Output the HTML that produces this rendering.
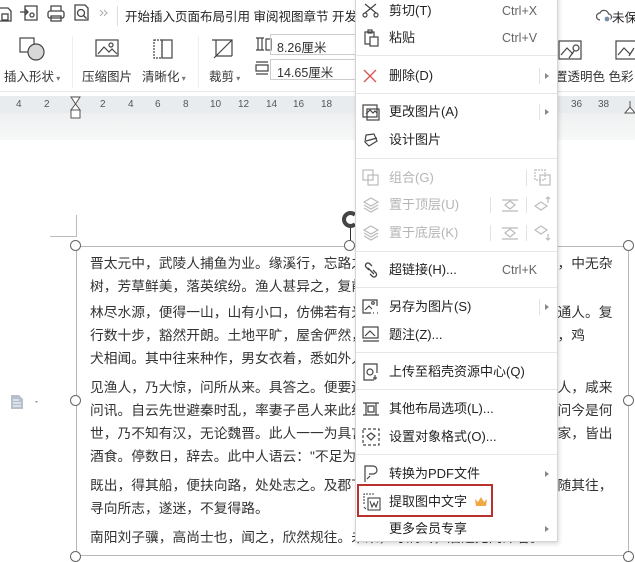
<!DOCTYPE html>
<html><head><meta charset="utf-8"><style>
*{margin:0;padding:0;box-sizing:border-box}
body{width:635px;height:562px;overflow:hidden;background:#fff;position:relative;font-family:"Liberation Sans","Noto Sans CJK SC",sans-serif;color:#333}
.a{position:absolute;white-space:nowrap}
.lbl{font-size:12.5px;color:#333}
.rn{font-size:10px;color:#555;top:99px}
.ln{position:absolute;left:90px;font-size:13.75px;color:#333;white-space:nowrap;line-height:16px}
.h{position:absolute;width:11px;height:11px;border:1px solid #666;border-radius:50%;background:#fff}
.menu{position:absolute;left:355px;top:-4px;width:203px;height:546px;background:#fff;border:1px solid #d5d5d5;box-shadow:1px 2px 4px rgba(0,0,0,.15)}
.mi{position:absolute;left:33px;font-size:13px;color:#222;white-space:nowrap;line-height:16px}
.dis{color:#b5b5b5}
.sc{position:absolute;left:146px;font-size:12.5px;color:#666;line-height:16px}
.sep{position:absolute;left:0;width:201px;height:1px;background:#e6e6e6}
.ar{position:absolute;left:189px;width:0;height:0;border-left:4px solid #888;border-top:3px solid transparent;border-bottom:3px solid transparent}
.vd{position:absolute;width:1px;height:16px;background:#e3e3e3}
.ic{position:absolute;left:6px}
</style></head><body>
<svg class="a" style="left:0;top:0" width="120" height="30" fill="none" stroke="#444" stroke-width="1.3">
<path d="M0 8h8l3 3v10H0"/><rect x="2" y="14" width="6" height="6"/>
<path d="M25 6h12v14H25z"/><path d="M20 12h8M25 9l3 3-3 3"/><circle cx="32" cy="15" r="2"/>
<path d="M51 11V6h10v5"/><rect x="48" y="11" width="16" height="7" rx="2"/><rect x="51" y="16" width="10" height="5"/>
<path d="M75 5h10l3 3v12H75z"/><circle cx="81" cy="13" r="3.5"/><path d="M83.5 15.5l3 3"/>
<path d="M100 10l3 3-3 3M104 10l3 3-3 3" stroke="#aaa" stroke-width="1"/>
</svg>
<div class="a" style="left:117px;top:6px;width:1px;height:20px;background:#ddd"></div>
<div class="a" style="left:125px;top:6px;font-size:12.5px;color:#222">开始插入页面布局引用 审阅视图章节 开发</div>
<svg class="a" style="left:596px;top:8px" width="16" height="14" fill="none" stroke="#555" stroke-width="1.2"><path d="M4 12a3.5 3.5 0 010-7 4.5 4.5 0 018.5 1 3 3 0 010 6"/><circle cx="11" cy="11" r="3" fill="#7a8fa8" stroke="#fff"/></svg>
<div class="a" style="left:612px;top:7px;font-size:12.5px;color:#222">未保</div>
<svg class="a" style="left:0;top:30px" width="360" height="36" fill="none" stroke="#444" stroke-width="1.2">
<rect x="20" y="8" width="14" height="14"/><circle cx="36" cy="22" r="8" fill="#d8d8d8"/>
<rect x="96" y="10" width="22" height="16"/><path d="M98 24l6-7 5 5 3-3 5 5"/><circle cx="111" cy="15" r="2"/>
<rect x="154" y="10" width="8" height="18" stroke-dasharray="2 1"/><rect x="162" y="10" width="10" height="18"/>
<path d="M216 10v16h16M212 10h20v16M214 28l18-18"/>
<path d="M256 8h8M256 20h8M258 8v12M262 8v12M266 9h5v11h-5z"/>
</svg>
<svg class="a" style="left:254px;top:60px" width="16" height="16" fill="none" stroke="#444" stroke-width="1.2"><path d="M2 2h12M2 14h12M2 5h12v6H2z"/></svg>
<div class="a" style="left:270px;top:34px;width:90px;height:21px;border:1px solid #ccc;border-right:none;font-size:12.5px;padding:2px 6px">8.26厘米</div>
<div class="a" style="left:270px;top:59px;width:90px;height:21px;border:1px solid #ccc;border-right:none;font-size:12.5px;padding:2px 6px">14.65厘米</div>
<div class="a lbl" style="left:4px;top:66px">插入形状<span style="font-size:8px;color:#777"> ▾</span></div>
<div class="a lbl" style="left:82px;top:66px">压缩图片</div>
<div class="a lbl" style="left:142px;top:66px">清晰化<span style="font-size:8px;color:#777"> ▾</span></div>
<div class="a lbl" style="left:209px;top:66px">裁剪<span style="font-size:8px;color:#777"> ▾</span></div>
<div class="a" style="left:72px;top:36px;width:1px;height:52px;background:#eee"></div>
<div class="a" style="left:198px;top:36px;width:1px;height:52px;background:#eee"></div>
<svg class="a" style="left:558px;top:40px" width="80" height="22" fill="none" stroke="#444" stroke-width="1.2"><rect x="1" y="1" width="22" height="18"/><path d="M3 15l6-7 6 6"/><circle cx="18" cy="8" r="3"/><path d="M16 11l-5 7"/><rect x="58" y="1" width="22" height="18"/><path d="M60 15l6-7 6 6"/><path d="M76 8l-5 8"/></svg>
<div class="a lbl" style="left:555px;top:66px">置透明色 色彩</div>
<div class="a" style="left:0;top:91px;width:635px;height:1px;background:#e8e8e8"></div>
<div class="a" style="left:0;top:96px;width:635px;height:17px;background:#e9ecef"></div>
<div class="a" style="left:0;top:113px;width:635px;height:27px;background:linear-gradient(#eff0f1,#f7f8f8)"></div>
<div class="a rn" style="left:16px">4</div><div class="a rn" style="left:44px">2</div>
<div class="a rn" style="left:100px">2</div><div class="a rn" style="left:128px">4</div><div class="a rn" style="left:155px">6</div><div class="a rn" style="left:183px">8</div><div class="a rn" style="left:210px">10</div><div class="a rn" style="left:238px">12</div><div class="a rn" style="left:266px">14</div><div class="a rn" style="left:293px">16</div><div class="a rn" style="left:321px">18</div>
<div class="a rn" style="left:571px">36</div><div class="a rn" style="left:598px">38</div>
<svg class="a" style="left:70px;top:96px" width="12" height="24" fill="#fff" stroke="#555"><path d="M1 1h9L5.5 8zM5.5 8L1 14h9zM1 14h9v8H1z"/></svg>
<svg class="a" style="left:624px;top:100px" width="11" height="14" fill="#fff" stroke="#555"><path d="M6 1v6M1 13l5-6 5 6z"/></svg>
<div class="a" style="left:50px;top:236px;width:26px;height:1px;background:#bbb"></div>
<div class="a" style="left:76px;top:215px;width:1px;height:22px;background:#bbb"></div>
<svg class="a" style="left:10px;top:394px" width="30" height="16"><path d="M1 1h8l4 4v10H1z" fill="#b5c0cc"/><path d="M3 6h6M3 9h8M3 12h8" stroke="#fff"/><path d="M25 7l3 0-1.5 2z" fill="#999"/></svg>
<div class="a" style="left:76px;top:246px;width:553px;height:310px;border:1px solid #b8b8b8"></div>
<div class="a" style="left:350px;top:226px;width:1px;height:20px;background:#333"></div>
<div class="a" style="left:342px;top:211px;width:17px;height:17px;border-radius:50%;border:4px solid #444;border-right-color:#fff"></div>
<div class="h" style="left:70px;top:240px"></div><div class="h" style="left:344px;top:240px"></div><div class="h" style="left:623px;top:240px"></div>
<div class="h" style="left:70px;top:395px"></div><div class="h" style="left:623px;top:395px"></div>
<div class="h" style="left:70px;top:551px"></div><div class="h" style="left:623px;top:551px"></div>
<div class="ln" style="top:256px">晋太元中，武陵人捕鱼为业。缘溪行，忘路之远近。忽逢桃花林，夹岸数百步，中无杂</div>
<div class="ln" style="top:279px">树，芳草鲜美，落英缤纷。渔人甚异之，复前行，欲穷其林。</div>
<div class="ln" style="top:305px">林尽水源，便得一山，山有小口，仿佛若有光。便舍船，从口入。初极狭，才通人。复</div>
<div class="ln" style="top:328px">行数十步，豁然开朗。土地平旷，屋舍俨然，有良田美池桑竹之属。阡陌交通，鸡</div>
<div class="ln" style="top:351px">犬相闻。其中往来种作，男女衣着，悉如外人。黄发垂髫，并怡然自乐。</div>
<div class="ln" style="top:380px">见渔人，乃大惊，问所从来。具答之。便要还家，设酒杀鸡作食。村中闻有此人，咸来</div>
<div class="ln" style="top:403px">问讯。自云先世避秦时乱，率妻子邑人来此绝境，不复出焉，遂与外人间隔。问今是何</div>
<div class="ln" style="top:426px">世，乃不知有汉，无论魏晋。此人一一为具言所闻，皆叹惋。余人各复延至其家，皆出</div>
<div class="ln" style="top:449px">酒食。停数日，辞去。此中人语云："不足为外人道也。"</div>
<div class="ln" style="top:478px">既出，得其船，便扶向路，处处志之。及郡下，诣太守，说如此。太守即遣人随其往，</div>
<div class="ln" style="top:501px">寻向所志，遂迷，不复得路。</div>
<div class="ln" style="top:530px">南阳刘子骥，高尚士也，闻之，欣然规往。未果，寻病终，后遂无问津者。</div>
<div class="menu">
<svg class="ic" style="top:5px" width="18" height="16" fill="none" stroke="#444" stroke-width="1.2"><path d="M3 2l11 9M14 2L3 11"/><circle cx="3" cy="13" r="2"/><circle cx="14" cy="13" r="2"/></svg>
<div class="mi" style="top:6px">剪切(T)</div><div class="sc" style="top:6px">Ctrl+X</div>
<svg class="ic" style="top:32px" width="18" height="18" fill="none" stroke="#444" stroke-width="1.2"><path d="M3 3h9v12H3z"/><rect x="6" y="1" width="4" height="3"/><rect x="8" y="8" width="8" height="9" fill="#fff"/></svg>
<div class="mi" style="top:33px">粘贴</div><div class="sc" style="top:33px">Ctrl+V</div>
<div class="sep" style="top:58px"></div>
<svg class="ic" style="top:71px" width="16" height="16" stroke="#d9534f" stroke-width="1.3"><path d="M2 2l12 12M14 2L2 14"/></svg>
<div class="mi" style="top:71px">删除(D)</div><div class="vd" style="left:183px;top:71px"></div><div class="ar" style="top:76px"></div>
<div class="sep" style="top:96px"></div>
<svg class="ic" style="top:106px" width="18" height="18" fill="none" stroke="#444" stroke-width="1.2"><rect x="1" y="2" width="14" height="12"/><path d="M4 11l4-4 3 3 2-2 2 2"/><rect x="5" y="6" width="12" height="11"/></svg>
<div class="mi" style="top:107px">更改图片(A)</div><div class="vd" style="left:183px;top:107px"></div><div class="ar" style="top:112px"></div>
<svg class="ic" style="top:134px" width="18" height="18" fill="none" stroke="#444" stroke-width="1.2"><path d="M4 4l8-1 3 7-8 5-4-4z"/><path d="M4 10l11-3"/></svg>
<div class="mi" style="top:135px">设计图片</div>
<div class="sep" style="top:161px"></div>
<svg class="ic" style="top:172px" width="18" height="18" fill="none" stroke="#bbb" stroke-width="1.2"><rect x="1" y="1" width="10" height="10"/><rect x="6" y="6" width="10" height="10"/></svg>
<div class="mi dis" style="top:173px">组合(G)</div><div class="vd" style="left:170px;top:173px"></div>
<svg style="position:absolute;left:178px;top:172px" width="18" height="18" fill="none" stroke="#bbb" stroke-width="1.2"><rect x="1" y="1" width="10" height="10" stroke-dasharray="2 1"/><rect x="6" y="6" width="10" height="10"/></svg>
<svg class="ic" style="top:199px" width="18" height="18" fill="none" stroke="#bbb" stroke-width="1.2"><path d="M9 2l7 4-7 4-7-4zM2 9l7 4 7-4M2 12l7 4 7-4"/></svg>
<div class="mi dis" style="top:200px">置于顶层(U)</div><div class="vd" style="left:134px;top:200px"></div><div class="vd" style="left:170px;top:200px"></div>
<svg style="position:absolute;left:145px;top:199px" width="18" height="18" fill="none" stroke="#bbb" stroke-width="1.2"><path d="M1 4h16M1 15h16M9 5l5 4-5 4-5-4z"/></svg>
<svg style="position:absolute;left:178px;top:199px" width="18" height="18" fill="none" stroke="#bbb" stroke-width="1.2"><path d="M7 6l6 4-6 4-6-4zM14 7V1M12 3l2-2 2 2"/></svg>
<svg class="ic" style="top:227px" width="18" height="18" fill="none" stroke="#bbb" stroke-width="1.2"><path d="M9 2l7 4-7 4-7-4zM2 9l7 4 7-4M2 12l7 4 7-4"/></svg>
<div class="mi dis" style="top:228px">置于底层(K)</div><div class="vd" style="left:134px;top:228px"></div><div class="vd" style="left:170px;top:228px"></div>
<svg style="position:absolute;left:145px;top:227px" width="18" height="18" fill="none" stroke="#bbb" stroke-width="1.2"><path d="M1 4h16M1 15h16M9 5l5 4-5 4-5-4z"/></svg>
<svg style="position:absolute;left:178px;top:227px" width="18" height="18" fill="none" stroke="#bbb" stroke-width="1.2"><path d="M7 2l6 4-6 4-6-4zM14 10v6M12 14l2 2 2-2"/></svg>
<div class="sep" style="top:254px"></div>
<svg class="ic" style="top:264px" width="18" height="18" fill="none" stroke="#444" stroke-width="1.3"><path d="M7 9L4 6a2.5 2.5 0 013.5-3.5L10 5M11 9l3 3a2.5 2.5 0 01-3.5 3.5L8 13M6 7l6 6"/></svg>
<div class="mi" style="top:265px">超链接(H)...</div><div class="sc" style="top:265px">Ctrl+K</div>
<div class="sep" style="top:290px"></div>
<svg class="ic" style="top:301px" width="18" height="18" fill="none" stroke="#444" stroke-width="1.2"><path d="M15 8V2H1v13h8"/><path d="M3 12l4-4 3 3"/><circle cx="11" cy="5" r="1.3"/><path d="M11 15h2M15 15h2" stroke-dasharray="1 1"/></svg>
<div class="mi" style="top:302px">另存为图片(S)</div><div class="vd" style="left:183px;top:302px"></div><div class="ar" style="top:307px"></div>
<svg class="ic" style="top:329px" width="18" height="18" fill="none" stroke="#444" stroke-width="1.2"><rect x="1" y="1" width="15" height="11"/><path d="M3 10l5-5 5 5M1 15h16"/></svg>
<div class="mi" style="top:330px">题注(Z)...</div>
<div class="sep" style="top:355px"></div>
<svg class="ic" style="top:366px" width="18" height="18" fill="none" stroke="#444" stroke-width="1.2"><path d="M12 17H2V1h13v9"/><circle cx="8" cy="9" r="3"/><path d="M13 12v5M11 15h4"/></svg>
<div class="mi" style="top:367px">上传至稻壳资源中心(Q)</div>
<div class="sep" style="top:392px"></div>
<svg class="ic" style="top:403px" width="18" height="18" fill="none" stroke="#444" stroke-width="1.2"><path d="M1 3h16M1 15h16M4 3v12M14 3v12M6 6h6v6H6z"/></svg>
<div class="mi" style="top:404px">其他布局选项(L)...</div>
<svg class="ic" style="top:431px" width="18" height="18" fill="none" stroke="#444" stroke-width="1.2"><rect x="1" y="1" width="16" height="16" stroke-dasharray="3 2"/><path d="M5 8l4-3 4 3-4 4z"/></svg>
<div class="mi" style="top:432px">设置对象格式(O)...</div>
<div class="sep" style="top:457px"></div>
<svg class="ic" style="top:467px" width="18" height="20" fill="none" stroke="#444" stroke-width="1.2"><path d="M3 18V2h8a4 4 0 010 8H7M8 12l-3 3"/></svg>
<div class="mi" style="top:469px">转换为PDF文件</div><div class="ar" style="top:474px"></div>
<div style="position:absolute;left:1px;top:487px;width:136px;height:33px;border:2px solid #b8312f"></div>
<svg class="ic" style="top:495px" width="20" height="20" fill="none" stroke="#444" stroke-width="1.1"><path d="M2 12V2h10" stroke-dasharray="2 1"/><rect x="6" y="6" width="12" height="12"/><path d="M8 9l2 6 2-4 2 4 2-6"/><path d="M2 15l2 2"/></svg>
<div class="mi" style="top:497px">提取图中文字</div>
<svg style="position:absolute;left:118px;top:499px" width="14" height="11"><path d="M1 3l3 3 3-5 3 5 3-3-1 7H2z" fill="#f0a746"/></svg>
<div class="mi" style="top:524px">更多会员专享</div><div class="ar" style="top:529px"></div>
</div>
</body></html>
